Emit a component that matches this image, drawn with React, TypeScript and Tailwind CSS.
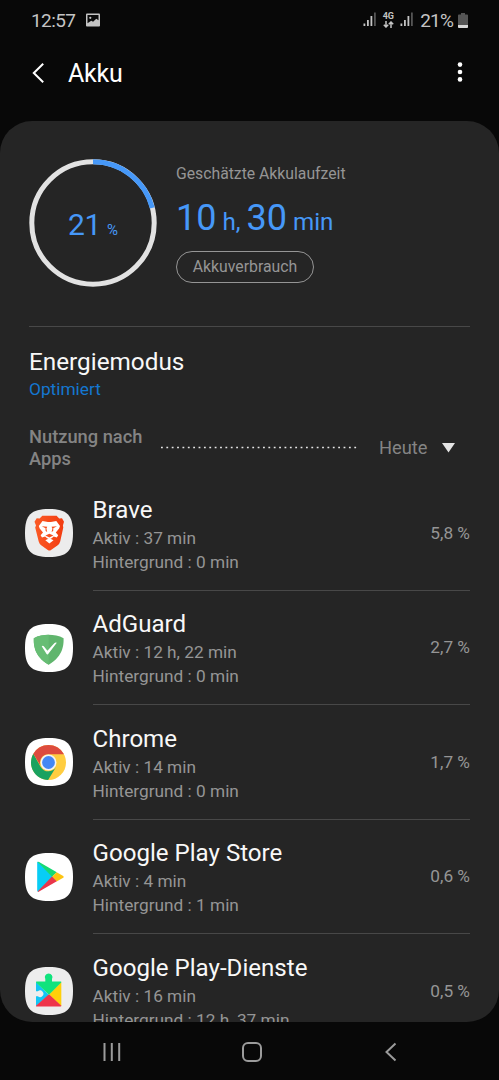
import type { ReactNode } from "react";

const SQUIRCLE = "M24 0C42 0 48 6 48 24S42 48 24 48S0 42 0 24S6 0 24 0Z";

function AppIcon({ bg = "#fff", children }: { bg?: string; children: ReactNode }) {
  return (
    <svg className="size-12 shrink-0" viewBox="0 0 48 48">
      <path d={SQUIRCLE} fill={bg} />
      {children}
    </svg>
  );
}

function BraveIcon() {
  return (
    <AppIcon bg="#ececec">
      <defs>
        <linearGradient id="brave" x1="0" x2="1">
          <stop offset="0" stopColor="#fb5a25" />
          <stop offset="1" stopColor="#f23c10" />
        </linearGradient>
      </defs>
      <path
        d="M17.3 6.8H31.6L34.2 9.5L37 9.2L39 12.8L37.9 16.5L38.3 18.6L35.2 32.4Q34.5 35 32.4 36.6L26 41Q24.4 42 22.8 41L16.5 36.6Q14.4 35 13.7 32.4L10.2 18.6L11 16.5L9.5 12.8L11.7 9.2L14.6 9.5Z"
        fill="url(#brave)"
      />
      <path
        d="M17.5 12L21.5 12.8Q24.4 13.4 27.3 12.8L31.3 12L35 16.9L34.1 19.6L30.8 23.6L33.2 26.2L31.8 28.6L28.7 27.6L26.7 29.3L24.4 30.2L22.1 29.3L20.1 27.6L17 28.6L15.6 26.2L18 23.6L14.7 19.6L13.8 16.9Z"
        fill="#fff"
      />
      <path d="M16.8 17.2L22.3 17.8L21.4 19.6L22.2 23L20.6 22L20.5 19.2Z" fill="#f8501f" />
      <path d="M32 17.2L26.5 17.8L27.4 19.6L26.6 23L28.2 22L28.3 19.2Z" fill="#f8501f" />
      <path d="M20.4 26.5L24.4 24.8L28.4 26.5L24.4 28.5Z" fill="#f8501f" />
      <path d="M20.3 31.3L24.4 29.2L28.5 31.3L24.4 34.5Z" fill="#fff" />
    </AppIcon>
  );
}

function AdGuardIcon() {
  return (
    <AppIcon>
      <path
        d="M23.7 10.8C28.4 10.8 34.2 11.8 38.6 14.2C38.6 19.5 39.1 31.7 23.7 40.8C8.3 31.7 8.8 19.5 8.8 14.2C13.2 11.8 19 10.8 23.7 10.8Z"
        fill="#60b56d"
      />
      <path
        d="M23.7 10.8C19 10.8 13.2 11.8 8.8 14.2C8.8 19.5 8.3 31.7 23.7 40.8Z"
        fill="#67bd74"
      />
      <path
        d="M16.7 22.2Q18 21.3 19.2 22.7L22.4 26.8L29.3 19.3Q30.4 18.1 31.8 18.8L23 30.2Q22.3 31 21.6 30.1Z"
        fill="#fff"
      />
    </AppIcon>
  );
}

function ChromeIcon() {
  return (
    <AppIcon>
      <circle cx="23.5" cy="24.5" r="17.5" fill="#ffcd40" />
      <path
        d="M15.7 29L8.34 15.75A17.5 17.5 0 0 0 23.1 42L30.9 29.3A9 9 0 0 1 15.7 29Z"
        fill="#1aa260"
      />
      <path
        d="M8.34 15.75A17.5 17.5 0 0 1 38.66 15.75L38.9 16.2H23.5A8.5 8.5 0 0 0 15.4 27.5Z"
        fill="#dd4b3e"
      />
      <circle cx="23.5" cy="24.5" r="8" fill="#f4f4f4" />
      <circle cx="23.5" cy="24.5" r="6.4" fill="#4587f3" />
    </AppIcon>
  );
}

function PlayStoreIcon() {
  return (
    <AppIcon>
      <path d="M12.2 9.8V37.6Q12.2 39.1 13.3 38.4L28 24L13.3 9Q12.2 8.3 12.2 9.8Z" fill="#08cdf5" />
      <path d="M12.6 8.9Q13.2 8.5 14.1 9.1L31.8 19.3L27 23.8Z" fill="#15d974" />
      <path d="M31.6 19.2L38.2 22.9Q39.4 23.8 38.2 24.7L31.6 28.4L27 23.8Z" fill="#fdc412" />
      <path d="M12.6 38.6Q13.2 39.2 14.1 38.6L31.8 28.3L27 23.6Z" fill="#e9364b" />
    </AppIcon>
  );
}

function PlayServicesIcon() {
  return (
    <AppIcon bg="#ededed">
      <path d="M11 15L24 28L11 39.2Z" fill="#12c5f5" />
      <path d="M36.3 15V39.2L24 27.5Z" fill="#ffd00a" />
      <path d="M11.5 39.5H35.5Q36.5 39.5 36.3 38.8L24 27.2L11 38.8Q10.8 39.5 11.5 39.5Z" fill="#ee344a" />
      <path
        d="M11.5 14.6H20.3V12.1A3.8 3.8 0 1 1 27 12.1V14.6H35.8Q36.6 14.6 36.2 15.5L24 27.7L11 15.5Q10.8 14.6 11.5 14.6Z"
        fill="#10e37d"
      />
      <path d="M10.5 24.2H12.9A3.3 3.3 0 1 1 12.9 29.2H10.5Z" fill="#ededed" />
    </AppIcon>
  );
}

const apps = [
  { name: "Brave", active: "37 min", background: "0 min", share: "5,8 %", icon: BraveIcon },
  { name: "AdGuard", active: "12 h, 22 min", background: "0 min", share: "2,7 %", icon: AdGuardIcon },
  { name: "Chrome", active: "14 min", background: "0 min", share: "1,7 %", icon: ChromeIcon },
  { name: "Google Play Store", active: "4 min", background: "1 min", share: "0,6 %", icon: PlayStoreIcon },
  { name: "Google Play-Dienste", active: "16 min", background: "12 h, 37 min", share: "0,5 %", icon: PlayServicesIcon },
];

function Signal() {
  return (
    <svg className="h-4 w-[14px]" viewBox="0 0 14 16" fill="#c4c4c4">
      <rect x="0.5" y="11.5" width="1.8" height="2.5" />
      <rect x="4" y="8" width="1.8" height="6" />
      <rect x="7.5" y="4" width="1.8" height="10" />
      <rect x="11" y="0.5" width="1.8" height="13.5" fill="#555" />
    </svg>
  );
}

function StatusBar() {
  return (
    <div className="flex h-10 items-center pl-[31px] pr-[31px] text-[#c4c4c4]">
      <span className="w-[45px] text-[19px] leading-none tracking-[-0.6px]">12:57</span>
      <svg className="ml-[10px] h-[14px] w-[14px]" viewBox="0 0 15 14">
        <rect width="15" height="14" rx="1" fill="#c4c4c4" />
        <path d="M1.6 10.4V1.6H13.4V7.2L11 5.6L7.6 9L5.6 7.8Z" fill="#0a0a0a" />
        <circle cx="4.6" cy="4.6" r="1.2" fill="#c4c4c4" />
      </svg>
      <div className="ml-auto flex items-center">
        <Signal />
        <div className="ml-[5px] flex w-3 flex-col items-center">
          <span className="text-[9px] font-bold leading-[9px] tracking-[-0.3px]">4G</span>
          <svg className="h-[7px] w-[11px]" viewBox="0 0 11 7" fill="none" stroke="#c4c4c4" strokeWidth="1.5">
            <path d="M3 0V6M0.8 3.8L3 6L5.2 3.8M8 7V1M5.8 3.2L8 1L10.2 3.2" />
          </svg>
        </div>
        <div className="ml-[6px]">
          <Signal />
        </div>
        <span className="ml-[6px] text-[19px] leading-none tracking-[-0.8px]">21%</span>
        <svg className="ml-[5px] h-[15px] w-[10px]" viewBox="0 0 10 15">
          <path d="M3 0H7V1.5H9.2Q10 1.5 10 2.5V12H0V2.5Q0 1.5 0.8 1.5H3Z" fill="#555" />
          <path d="M0 12H10V14Q10 15 9.2 15H0.8Q0 15 0 14Z" fill="#d8d8d8" />
        </svg>
      </div>
    </div>
  );
}

function Header() {
  return (
    <div className="flex h-[81px] items-start pl-8 pr-[35px] pt-[18px] text-white">
      <svg className="mt-[5px] h-5 w-3" viewBox="0 0 12 20" fill="none" stroke="currentColor" strokeWidth="2">
        <path d="M11.2 0.8L1.8 10L11.2 19.2" />
      </svg>
      <h1 className="ml-6 text-[25px] leading-[31px] tracking-[-0.2px]">Akku</h1>
      <svg className="ml-auto mt-[3px] h-[22px] w-2" viewBox="0 0 8 22" fill="currentColor">
        <circle cx="4" cy="3.6" r="2.3" />
        <circle cx="4" cy="11" r="2.3" />
        <circle cx="4" cy="18.4" r="2.3" />
      </svg>
    </div>
  );
}

function BatteryRing({ level }: { level: number }) {
  return (
    <div className="grid size-32 shrink-0 place-items-center">
      <svg className="col-start-1 row-start-1 size-32 -rotate-90" viewBox="0 0 128 128" fill="none" strokeWidth="5">
        <circle cx="64" cy="64" r="61.2" stroke="#e2e2e2" />
        <circle cx="64" cy="64" r="61.2" stroke="#4698f8" pathLength="100" strokeDasharray={`${level} 100`} />
      </svg>
      <div className="col-start-1 row-start-1 pt-[6px] text-[#4698f8]">
        <span className="text-[30px] leading-none tracking-[-0.4px]">{level}</span>
        <span className="ml-[6px] text-[15px]">%</span>
      </div>
    </div>
  );
}

export default function App() {
  return (
    <div className="flex h-[1080px] w-[499px] flex-col overflow-hidden bg-[#080808] font-[Roboto,sans-serif]">
      <StatusBar />
      <Header />

      <main className="h-[900.5px] shrink-0 overflow-hidden rounded-[32px] bg-[#252525]">
        <section className="mx-[29px] flex h-[206px] border-b border-[#484848] pt-[38px]">
          <BatteryRing level={21} />
          <div className="ml-[19px] pt-[5px]">
            <p className="text-[15.75px] leading-5 text-[#959595]">Geschätzte Akkulaufzeit</p>
            <p className="mt-3 whitespace-nowrap text-[24.2px] leading-[44px] text-[#4698f8]">
              <span className="text-[36px]">10</span> h, <span className="text-[36px]">30</span> min
            </p>
            <button className="mt-[7px] h-8 w-[138px] rounded-full border-[1.5px] border-[#959595] text-[15.8px] text-[#959595]">
              Akkuverbrauch
            </button>
          </div>
        </section>

        <section className="mx-[29px] pt-[19px]">
          <h2 className="text-[24.3px] leading-8 text-[#f8f8f8]">Energiemodus</h2>
          <p className="-mt-px text-[17.3px] leading-6 text-[#1477d0]">Optimiert</p>
        </section>

        <div className="ml-[29px] mr-[44px] mt-[25px] flex h-[44px] items-center text-[18.3px] font-medium text-[#848484]">
          <h3 className="w-[131px] leading-[22px]">Nutzung nach Apps</h3>
          <svg className="h-2 w-[198px]" viewBox="0 0 198 8">
            <path d="M1 3.5H198" stroke="#e8e8e8" strokeWidth="1.7" strokeDasharray="1.8 3.57" />
          </svg>
          <span className="-mt-px ml-[21px] font-normal">Heute</span>
          <svg className="-mt-px ml-auto h-[10px] w-[13px]" viewBox="0 0 13 10">
            <path d="M0 0H13L6.5 9.5Z" fill="#e4e4e4" />
          </svg>
        </div>

        <ul className="pt-[6px]">
          {apps.map(({ name, active, background, share, icon: Icon }) => (
            <li key={name} className="flex h-[114.5px] items-center pl-[25px] pr-[29px]">
              <Icon />
              <div className="ml-[19.5px] flex h-full flex-1 items-center border-b border-[#484848]">
                <div className="pt-[2px]">
                  <h4 className="text-[24.1px] leading-8 text-[#f8f8f8]">{name}</h4>
                  <p className="text-[17.25px] leading-6 text-[#959595]">Aktiv : {active}</p>
                  <p className="text-[17.25px] leading-6 text-[#959595]">Hintergrund : {background}</p>
                </div>
                <span className="ml-auto pt-[2px] text-[17.25px] text-[#959595]">{share}</span>
              </div>
            </li>
          ))}
        </ul>
      </main>

      <nav className="flex flex-1 items-center justify-between pl-[102px] pr-[98px] pt-[2px]">
        <svg className="h-5 w-5" viewBox="0 0 20 20" fill="none" stroke="#9b9b9b" strokeWidth="2">
          <path d="M2.5 1V19M9.8 1V19M17.2 1V19" />
        </svg>
        <svg className="h-5 w-5" viewBox="0 0 20 20" fill="none" stroke="#9b9b9b" strokeWidth="2">
          <rect x="1" y="1" width="18" height="18" rx="5" />
        </svg>
        <svg className="h-5 w-5" viewBox="0 0 20 20" fill="none" stroke="#9b9b9b" strokeWidth="2">
          <path d="M14.5 1.5L5.5 10L14.5 18.5" />
        </svg>
      </nav>
    </div>
  );
}
